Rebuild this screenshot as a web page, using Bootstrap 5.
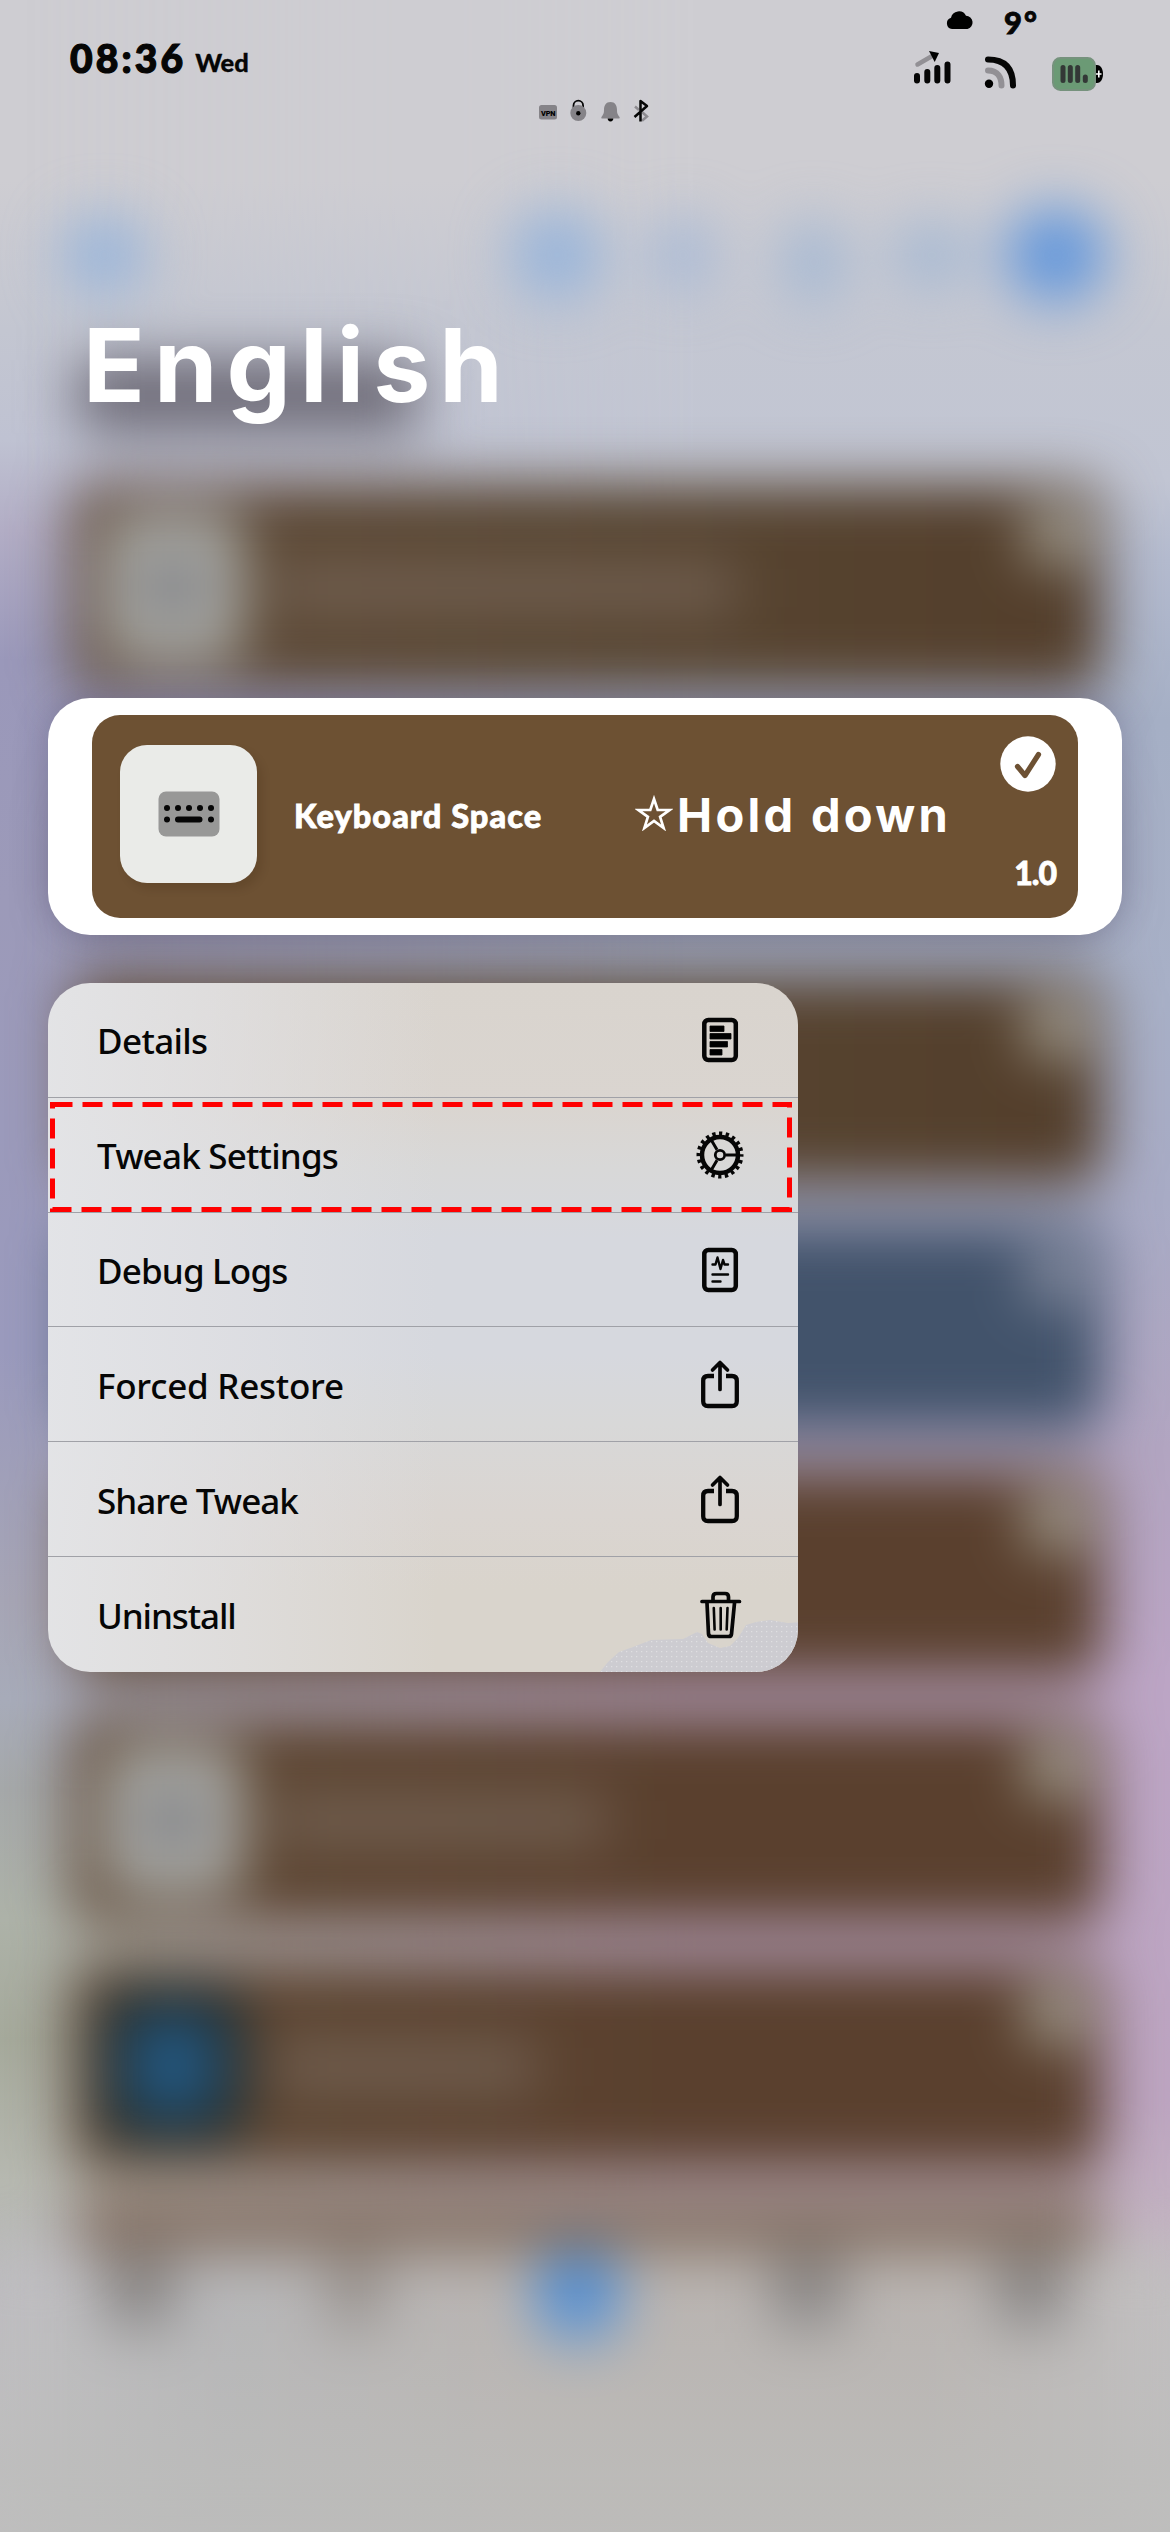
<!DOCTYPE html>
<html lang="en">
<head>
<meta charset="utf-8">
<meta name="viewport" content="width=device-width, initial-scale=1">
<title>English</title>
<link href="https://cdn.jsdelivr.net/npm/bootstrap@5.3.0/dist/css/bootstrap.min.css" rel="stylesheet">
<style>
body{font-family:Lato,"Liberation Sans",sans-serif;background:#cecdd2;color:#060606}
svg{display:block;flex:none}
.phone{width:1170px;height:2532px;background:linear-gradient(180deg,#cecdd2 0,#cecdd2 180px,#c3c6d1 330px,#bfc2d2 440px,#b2adc5 530px,#9a98ba 660px,#9c9ab9 900px,#9a9abd 1350px,#a6a5b5 1600px,#a7abb9 1700px,#a5a8a9 1790px,#adb2a8 1920px,#a5a99b 2040px,#b6b8b0 2180px,#bbbabd 2290px,#c2c1c5 2532px)}
.right-tint{inset:0;background:linear-gradient(180deg,#cecdd2 0,#cecdd2 180px,#c4c7d2 330px,#c1c5d3 480px,#b4bbcf 560px,#a5afc5 720px,#a8b0c7 1000px,#a8abc5 1200px,#b2a5c1 1450px,#bca5c5 1680px,#bda5c1 2100px,#c2b2c1 2220px,#c1bec0 2300px,#c1c0c3 2532px);-webkit-mask-image:linear-gradient(90deg,transparent 20px,#000 700px);mask-image:linear-gradient(90deg,transparent 20px,#000 700px)}
.haze{inset:0;filter:blur(28px)}
.tool-row{height:484px;padding:208px 66px 0 62px}
.disc{border-radius:50%;flex:none}
.shade{width:340px;height:72px;margin:58px 0 0 16px;background:#6b6874}
.blur-card{width:1032px;height:207px;margin:0 0 39.5px 71px;border-radius:26px;background:linear-gradient(90deg,#5f4a37,#584632 45%,#533e2b);padding:28px 14px 28px 32px}
.blur-card.low{background:linear-gradient(90deg,#5e4834,#5a402e 60%)}
.blur-card.blue{background:#42536b}
.blur-card.gap-slot{background:linear-gradient(180deg,transparent 15%,rgba(90,85,90,.35) 40%,rgba(90,85,90,.35))}
.b-icon{width:140px;height:150px;border-radius:26px;background:#acada9}
.b-icon i{width:56px;height:56px;background:#77777d}
.b-icon.navy{background:#172d36}
.b-icon.navy i{width:86px;height:96px;background:#275a83;border-radius:40px}
.b-line{height:46px;margin-left:32px;background:#736153}
.b-tick{width:64px;height:64px;margin-top:-10px;background:#a9a599}
.peek{height:55px;margin:-14px 70px 0 76px;background:#826e60}
.tabs-blur{height:292px;background:linear-gradient(90deg,#c0bfc2 0,#b6b6b8 18%,#b9b4b1 45%,#b9b4b1 80%,#c1bfc0 100%);padding:0 104px 0 104px}
.tabs-blur div{width:70px;height:82px;background:#8a8786}
.tabs-blur .thin{width:56px;background:#98928e}
.tabs-blur .on{background:#5690d2;height:94px;width:84px;border-radius:30px}
.foot-fade{height:240px;bottom:0;left:0;right:0;background:linear-gradient(180deg,transparent,#bdbdbb 75%);opacity:.7}
.status{height:130px;padding:0 64px 0 70px}
.clock{font-weight:900;font-size:39px;letter-spacing:3.1px;line-height:1;-webkit-text-stroke:1.2px #060606}
.day{font-weight:900;font-size:25.5px;line-height:1;-webkit-text-stroke:.3px #060606}
.temp{font-weight:900;font-size:31px;line-height:1;letter-spacing:2px;-webkit-text-stroke:.8px #060606}
.page-title{font-family:Inter,sans-serif;font-weight:700;font-size:102px;line-height:124px;letter-spacing:9px;color:#fff;padding-left:83px;margin:173px 0 0}
.tile{width:1074px;height:237px;margin:0 0 0 48px;border-radius:42px;background:#fff;padding:17px 44px;box-shadow:0 0 34px rgba(60,50,90,.3)}
.tile-in{background:#6d5133;border-radius:28px;height:203px;padding:30px 22px 0 28px;color:#fff}
.app-icon{width:137px;height:138px;border-radius:27px;background:#eaebe8;box-shadow:5px 6px 9px rgba(50,30,10,.15)}
.app-name{font-weight:900;font-size:32.5px;line-height:40px;margin-left:37px;width:341px;letter-spacing:1.05px;-webkit-text-stroke:.8px #fff}
.hold{font-family:Inter,sans-serif;font-weight:700;font-size:47px;line-height:56px;letter-spacing:3.3px}
.ver{font-weight:900;font-size:32px;line-height:32px;letter-spacing:-1px;-webkit-text-stroke:.8px #fff}
.menu{width:750px;height:689px;margin:48px 0 0 48px;border-radius:42px;overflow:hidden;background:linear-gradient(90deg,rgba(228,229,232,.9) 0,rgba(226,226,229,.65) 22%,rgba(220,220,222,0) 52%),linear-gradient(180deg,#d9d4ce 0,#dad5d0 18%,#d8d8d8 27%,#d6d8de 37%,#d6d8de 54%,#d8d8d8 64%,#dad5d1 77%,#d9d4cc 88%)}
.menu-row{height:115px;padding:1px 48px 0 49px;border:0;border-bottom:1.5px solid #a0a1a7;background:transparent;color:#060606;border-radius:0}
.menu-row:last-of-type{border-bottom:0}
.menu-row span{font-family:"Noto Sans",sans-serif;font-weight:500;font-size:35px;line-height:48px;padding-top:2px}
.patch{right:0;bottom:0}
.marker{left:0;top:115px}
</style>
<script src="https://cdn.jsdelivr.net/npm/bootstrap@5.3.0/dist/js/bootstrap.bundle.min.js"></script>
</head>
<body>
<div class="phone position-relative overflow-hidden">
  <div class="right-tint position-absolute"></div>
  <!-- blurred list behind the menu -->
  <div class="haze position-absolute" aria-hidden="true">
    <div class="tool-row">
      <div class="d-flex align-items-center">
        <div class="disc" style="width:84px;height:78px;background:#97b4da"></div>
        <div class="disc" style="width:94px;height:90px;background:#97b4da;margin-left:364px"></div>
        <div class="disc" style="width:60px;height:72px;background:#a3b7d6;margin-left:49px"></div>
        <div class="disc" style="width:62px;height:80px;background:#a0b6d3;margin-left:70px;margin-top:14px"></div>
        <div class="disc" style="width:80px;height:60px;background:#a0b6d3;margin-left:47px"></div>
        <div class="disc" style="width:100px;height:94px;background:#6196db;margin-left:34px"></div>
      </div>
      <div class="shade"></div>
    </div>
    <div class="blur-card d-flex"><div class="b-icon d-flex align-items-center justify-content-center"><i></i></div><div class="b-line align-self-center" style="width:460px"></div><div class="b-tick disc ms-auto"></div></div>
    <div class="blur-card gap-slot"></div>
    <div class="blur-card d-flex"><div class="b-tick disc ms-auto"></div></div>
    <div class="blur-card blue d-flex"><div class="b-tick disc ms-auto" style="background:#8a90a3"></div></div>
    <div class="blur-card low d-flex"><div class="b-tick disc ms-auto"></div></div>
    <div class="blur-card low d-flex"><div class="b-icon d-flex align-items-center justify-content-center"><i></i></div><div class="b-line align-self-center" style="width:330px"></div><div class="b-tick disc ms-auto"></div></div>
    <div class="blur-card low d-flex"><div class="b-icon navy d-flex align-items-center justify-content-center"><i></i></div><div class="b-line align-self-center" style="width:260px"></div><div class="b-tick disc ms-auto"></div></div>
    <div class="peek"></div>
    <div class="tabs-blur d-flex justify-content-between"><div></div><div class="thin"></div><div class="on"></div><div></div><div></div></div>
  </div>
  <div class="foot-fade position-absolute"></div>

  <div class="position-relative">
    <header class="status d-flex">
      <div class="d-flex align-items-end gap-2" style="height:78px;width:190px">
        <span class="clock">08:36</span><span class="day" style="padding:0 0 3px 1px">Wed</span>
      </div>
      <div class="d-flex align-items-end" style="margin-left:278px;padding-bottom:7px">
        <svg width="112" height="24" viewBox="538 99 112 24">
          <rect x="539" y="105" width="18" height="14.5" rx="2.5" fill="#858388"/>
          <text x="541" y="115.6" font-family="Roboto" font-weight="900" font-size="7.4" textLength="14.5">VPN</text>
          <path d="M573.5 108v-2.500a4.800 4.800 0 0 1 9.600 0V108" fill="none" stroke="#060606" stroke-width="1.800"/>
          <ellipse cx="578.300" cy="113" rx="8" ry="8" fill="#858388"/><circle cx="578.300" cy="113.300" r="2.200"/>
          <path d="M610.500 102c4.500 0 6.500 3.500 6.500 8 0 4 1 4.500 2.500 7 .5 1 0 1.600-1 1.600h-16c-1 0-1.500-.6-1-1.600 1.500-2.500 2.500-3 2.500-7 0-4.500 2-8 6.500-8z" fill="#858388"/><path d="M607.700 118.600h5.600a2.800 2.800 0 0 1-5.600 0z"/>
          <path d="M635 106.500l4 3.500M642 112l5 4.500-5 4.300" fill="none" stroke="#8d8b90" stroke-width="2.500"/>
          <path d="M634.500 117l12.500-11-6.500-5V121.500" fill="none" stroke="#060606" stroke-width="2.500" stroke-linejoin="round"/>
        </svg>
      </div>
      <div class="ms-auto" style="width:196px">
        <div class="d-flex align-items-center" style="height:46px;padding:0 0 6px 36px">
          <svg width="28" height="20" viewBox="0 0 28 20"><path d="M6 19a5.800 5.800 0 0 1-1-11.300A8 8 0 0 1 20 5.800 6.700 6.700 0 0 1 21.500 19z"/></svg>
          <span class="temp" style="margin-left:30px;padding-top:5px">9°</span>
        </div>
        <svg width="196" height="48" viewBox="910 46 196 48">
          <path d="M917.500 64.500L933 55.500" stroke="#929095" stroke-width="4.500" stroke-linecap="round"/><path d="M929 51l10 2-4.300 9z"/>
          <g stroke="#060606" stroke-width="6" stroke-linecap="round"><path d="M917 76v4.500M927.300 72v8.500M937.300 68v12.500M947.500 64.500v16"/></g>
          <path d="M988 70.500c10 0 13.500 7 13.500 15" fill="none" stroke="#929095" stroke-width="6" stroke-linecap="round"/>
          <path d="M988 59.500c18 0 25 10 25 26" fill="none" stroke="#060606" stroke-width="6" stroke-linecap="round"/><circle cx="989" cy="83.700" r="4.200"/>
          <path d="M1095 65h2c8 0 8 18 0 18h-2z"/><path d="M1098.800 70.500v7M1096 74h5.500" stroke="#fff" stroke-width="1.600"/>
          <rect x="1053" y="58" width="42" height="32" rx="7.500" fill="#6b9a75" stroke="#76927d" stroke-width="2"/>
          <path d="M1063 67.500v13M1070.300 67.500v13M1077.700 67.500v13M1085.300 77v3.500" stroke="#333836" stroke-width="5" stroke-linecap="round"/>
        </svg>
      </div>
    </header>

    <h1 class="page-title">English</h1>

    <section class="tile" style="margin-top:271px">
      <div class="tile-in d-flex">
        <div class="app-icon d-flex align-items-center justify-content-center">
          <svg width="62" height="46" viewBox="0 0 62 46"><rect x=".5" y=".5" width="61" height="45" rx="7.500" fill="#989897"/><path d="M9 17h.01M20 17h.01M31 17h.01M42 17h.01M53 17h.01M9 28.500h.01M20 28.500h21.500M53 28.500h.01" stroke="#060606" stroke-width="6" stroke-linecap="round"/></svg>
        </div>
        <div class="app-name text-nowrap" style="padding-top:51px">Keyboard Space</div>
        <div class="d-flex align-items-start" style="padding-top:42px">
          <svg width="38" height="36" viewBox="0 0 38 36" style="margin:8px 4px 0 0"><path d="M19 4l3.700 11H34.500l-9.400 6.800L28.600 33 19 26l-9.600 7 3.500-11.200L3.500 15h11.800z" fill="none" stroke="#fff" stroke-width="2.700"/></svg>
          <span class="hold text-nowrap">Hold down</span>
        </div>
        <div class="ms-auto d-flex flex-column align-items-end" style="margin-top:-9px">
          <svg width="56" height="56" viewBox="0 0 56 56"><circle cx="28" cy="28" r="27.700" fill="#fff"/><path d="M17.500 30.500l7.500 9L38.500 18.500" fill="none" stroke="#6d5133" stroke-width="5.200" stroke-linecap="round" stroke-linejoin="round"/></svg>
          <span class="ver" style="margin-top:65px">1.0</span>
        </div>
      </div>
    </section>

    <nav class="menu position-relative list-group">
      <svg class="patch position-absolute" width="200" height="54" viewBox="598 1618 200 54"><defs><pattern id="dots" width="5" height="5" patternUnits="userSpaceOnUse"><rect width="5" height="5" fill="#cdccd1"/><path d="M1 1h1.300v1.300H1z" fill="#dfdfe1"/></pattern></defs><path d="M600 1672l8-10 11-10 14-5 18-7 32-1 14-7 5 2 6 9 12 5 10-2 8-8 8-13 10-3 14-2 18 3 12-1v50z" fill="url(#dots)"/></svg>
      <a class="menu-row list-group-item d-flex align-items-center justify-content-between"><span style="letter-spacing:-.65px">Details</span>
        <svg width="60" height="60" viewBox="-30 -30 60 60"><rect x="-15.700" y="-20" width="31.500" height="40" rx="4" fill="none" stroke="#060606" stroke-width="4.500"/><path d="M-10-14H4v5.500h-14zM-10-6.500H11v5.500h-21zM-10 1.500H7.500V7H-10zM-10 9.500H2V15h-12z" stroke="#060606" stroke-width=".8" stroke-linejoin="round"/></svg></a>
      <a class="menu-row list-group-item d-flex align-items-center justify-content-between"><span style="letter-spacing:-.8px">Tweak Settings</span>
        <svg width="60" height="60" viewBox="-30 -30 60 60"><g fill="none" stroke="#060606"><circle r="18" stroke-width="4.500"/><circle r="21.500" stroke-width="4" stroke-dasharray="3.300 3.454" stroke-dashoffset="1.650"/><circle r="4.700" stroke-width="2.800"/><path d="M6 0h12M-3 -5.200L-9 -15.600M-3 5.200L-9 15.600" stroke-width="3"/></g></svg></a>
      <a class="menu-row list-group-item d-flex align-items-center justify-content-between"><span style="letter-spacing:-.85px">Debug Logs</span>
        <svg width="60" height="60" viewBox="-30 -30 60 60"><rect x="-15.700" y="-20" width="31.500" height="40" rx="4" fill="none" stroke="#060606" stroke-width="4.500"/><path d="M-7.500-5.500h3l2-7L.5-1 3-10l1.500 4.500H8M-7.500 4.500H8M-7.500 11.500H.5" fill="none" stroke="#060606" stroke-width="2.400" stroke-linecap="round" stroke-linejoin="round"/></svg></a>
      <a class="menu-row list-group-item d-flex align-items-center justify-content-between"><span style="letter-spacing:-.25px">Forced Restore</span>
        <svg width="60" height="60" viewBox="-30 -30 60 60"><path d="M-6-9h-6q-4.800 0-4.800 4.800v20.400q0 4.800 4.800 4.800h24q4.800 0 4.800-4.800V-4.200Q16.800-9 12-9H6" fill="none" stroke="#060606" stroke-width="4.300"/><path d="M0 4.500V-22M-7.500-15L0-22.500 7.500-15" fill="none" stroke="#060606" stroke-width="3.700" stroke-linecap="round" stroke-linejoin="round"/></svg></a>
      <a class="menu-row list-group-item d-flex align-items-center justify-content-between"><span style="letter-spacing:-.95px">Share Tweak</span>
        <svg width="60" height="60" viewBox="-30 -30 60 60"><path d="M-6-9h-6q-4.800 0-4.800 4.800v20.400q0 4.800 4.800 4.800h24q4.800 0 4.800-4.800V-4.200Q16.800-9 12-9H6" fill="none" stroke="#060606" stroke-width="4.300"/><path d="M0 4.500V-22M-7.500-15L0-22.500 7.500-15" fill="none" stroke="#060606" stroke-width="3.700" stroke-linecap="round" stroke-linejoin="round"/></svg></a>
      <a class="menu-row list-group-item d-flex align-items-center justify-content-between"><span style="letter-spacing:-1.1px">Uninstall</span>
        <svg width="60" height="60" viewBox="-30 -30 60 60"><g fill="none" stroke="#060606" stroke-linecap="round" stroke-linejoin="round"><path d="M-18-13.500h37.500M-13-12l1.500 31q.2 2.500 3 2.500h17q2.800 0 3-2.500L14.500-12" stroke-width="3.700"/><path d="M-7-14v-4q0-3.500 3.500-3.500h8.500q3.500 0 3.500 3.500v4" stroke-width="3.700"/><path d="M-6.200-7l.8 21.500M.7-7V14.500M7.500-7L6.700 14.500" stroke-width="2.600"/></g></svg></a>
      <svg class="marker position-absolute" width="750" height="118" viewBox="48 1098 750 118"><path d="M52.500 1104.500H789.500V1209.500H52.500Z" fill="none" stroke="#f00" stroke-width="5" stroke-dasharray="20 10"/></svg>
    </nav>
  </div>
</div>
</body>
</html>
